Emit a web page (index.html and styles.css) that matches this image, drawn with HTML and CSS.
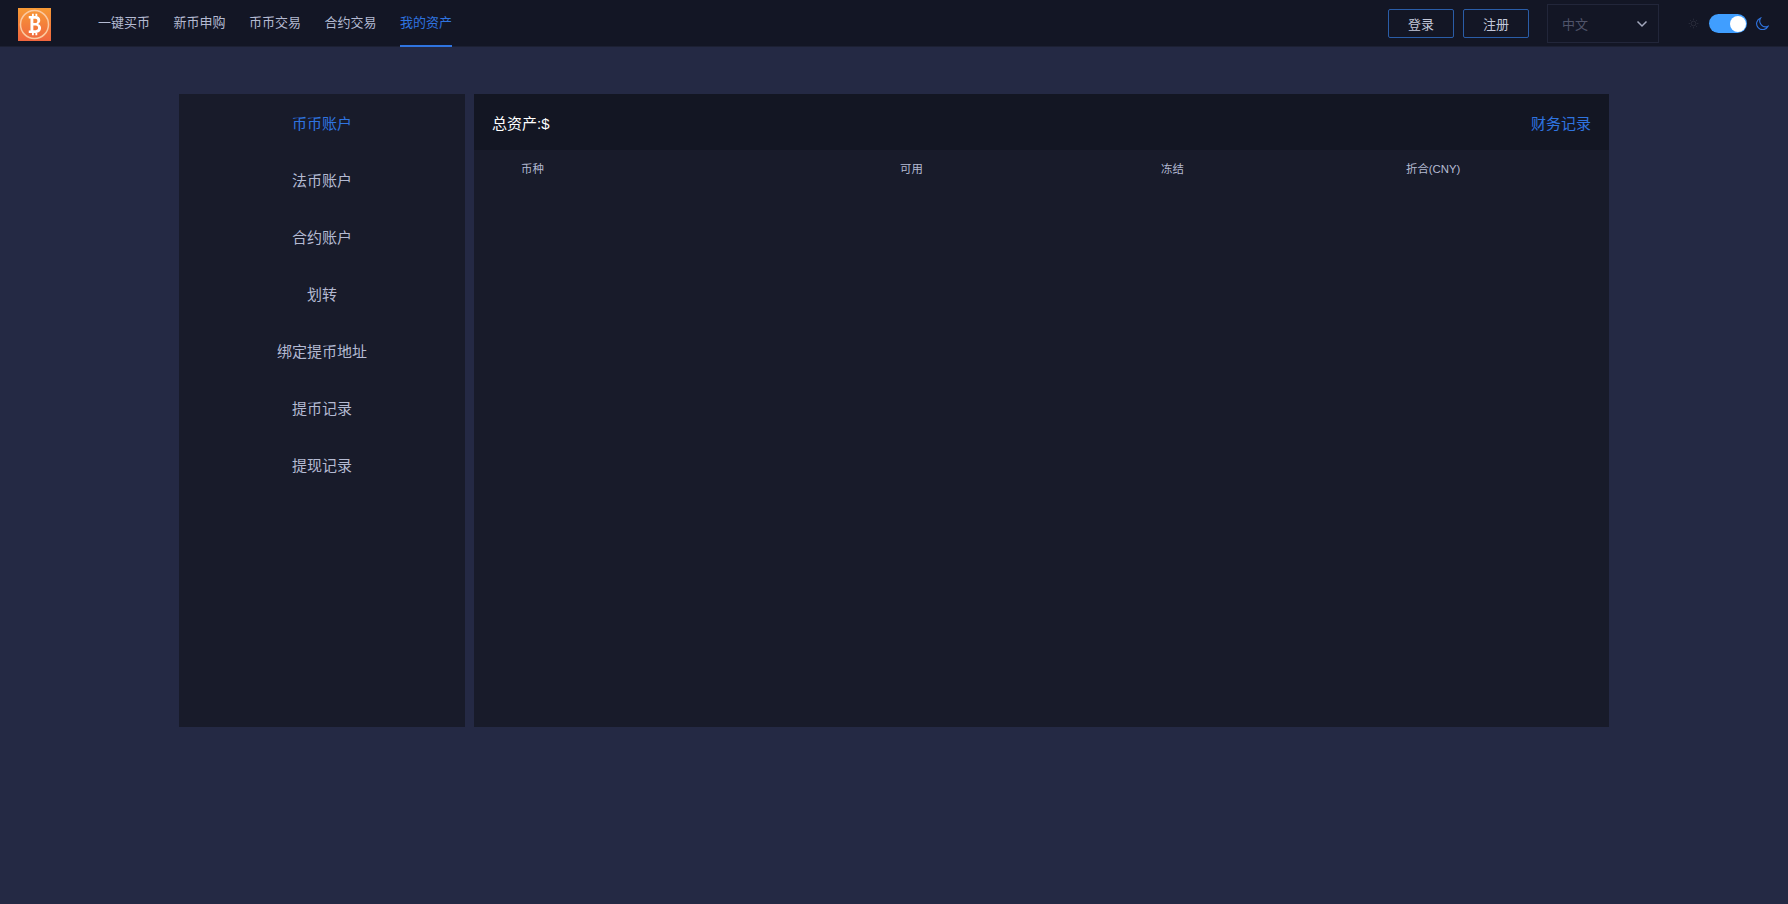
FILE: index.html
```html
<!DOCTYPE html>
<html lang="zh-CN">
<head>
<meta charset="utf-8">
<title>我的资产</title>
<link rel="stylesheet" href="styles.css">
</head>
<body>
<header class="topbar">
  <svg class="logo" viewBox="0 0 33 33" aria-hidden="true">
    <defs><linearGradient id="lg" x1="0" y1="0" x2="0" y2="1"><stop offset="0" stop-color="#f79a36"/><stop offset="1" stop-color="#f0663f"/></linearGradient></defs>
    <rect width="33" height="33" fill="url(#lg)"/>
    <circle cx="16.500" cy="16.500" r="14" fill="none" stroke="#fbc9a0" stroke-width="1.500"/>
    <path transform="translate(16.500 16.500) scale(1.150 1.200) translate(-17 -16.500)" d="M12 9.500h6c2.600 0 4 1.400 4 3.400 0 1.500-.8 2.600-2.100 3.100 1.700.4 2.800 1.700 2.800 3.500 0 2.400-1.700 4-4.500 4H12v-2h1.500V11.500H12z M16 11.800v3.400h1.800c1.100 0 1.700-.7 1.700-1.700s-.6-1.700-1.700-1.700z M16 17.400v3.800h2.200c1.200 0 1.900-.8 1.900-1.900s-.7-1.900-1.900-1.900z M14.800 7.500h1.600v2h-1.600z M17.800 7.500h1.600v2h-1.600z M14.800 23.500h1.600v2h-1.600z M17.800 23.500h1.600v2h-1.600z" fill="#fff" fill-rule="evenodd"/>
  </svg>
  <nav class="nav">
    <a class="nav-item">一键买币</a>
    <a class="nav-item">新币申购</a>
    <a class="nav-item">币币交易</a>
    <a class="nav-item">合约交易</a>
    <a class="nav-item is-active">我的资产</a>
  </nav>
  <div class="actions">
    <button class="btn">登录</button>
    <button class="btn">注册</button>
    <div class="lang">
      <span>中文</span>
      <svg class="chev" viewBox="0 0 12 8" aria-hidden="true"><path d="M1.500 1.500 6 6l4.500-4.500" fill="none" stroke="#a3a8bd" stroke-width="1.500"/></svg>
    </div>
    <div class="theme">
      <svg class="sun" viewBox="0 0 14 14" aria-hidden="true">
        <circle cx="7" cy="7" r="3" fill="none" stroke="#2a2d3c" stroke-width="1.200"/>
        <path d="M7 .8v2M7 11.200v2M.8 7h2M11.200 7h2M2.600 2.600l1.400 1.400M10 10l1.400 1.400M2.600 11.400 4 10M10 4l1.400-1.400" stroke="#2a2d3c" stroke-width="1.100"/>
      </svg>
      <span class="toggle"><span class="knob"></span></span>
      <svg class="moon" viewBox="0 0 14 14" aria-hidden="true"><path d="M5 1a6.300 6.300 0 0 0 8 9A6.500 6.500 0 1 1 5 1z" fill="none" stroke="#2f74e0" stroke-width="1.200"/></svg>
    </div>
  </div>
</header>
<main class="page">
  <aside class="side">
    <a class="side-item is-active">币币账户</a>
    <a class="side-item">法币账户</a>
    <a class="side-item">合约账户</a>
    <a class="side-item">划转</a>
    <a class="side-item">绑定提币地址</a>
    <a class="side-item">提币记录</a>
    <a class="side-item">提现记录</a>
  </aside>
  <section class="panel">
    <div class="panel-head">
      <span class="total">总资产:$</span>
      <a class="records">财务记录</a>
    </div>
    <div class="table-head">
      <span>币种</span>
      <span>可用</span>
      <span>冻结</span>
      <span>折合(CNY)</span>
    </div>
  </section>
</main>
</body>
</html>
```
FILE: styles.css
```css
* { box-sizing: border-box; }
html, body { height: 100%; }
body {
  margin: 0;
  background: #242944;
  font-family: "Liberation Sans", "Noto Sans CJK SC", sans-serif;
  color: #b4bad2;
  overflow: hidden;
}
.topbar {
  display: flex;
  align-items: center;
  height: 47px;
  padding: 0 18px 0 18px;
  background: #131625;
  box-shadow: inset 0 -1px 0 #1c2033;
}
.logo { width: 33px; height: 33px; flex: none; margin-top: 1px; }
.nav { display: flex; gap: 23.500px; margin-left: 47px; height: 47px; }
.nav-item {
  display: block;
  font-size: 13px;
  line-height: 46px;
  color: #b4bad2;
}
.nav-item.is-active {
  color: #2f74e0;
  line-height: 45px;
  border-bottom: 2px solid #2f74e0;
}
.actions { display: flex; align-items: center; margin-left: auto; }
.btn {
  width: 66px;
  height: 29px;
  margin-right: 9px;
  padding: 0;
  background: transparent;
  border: 1px solid #2a5da8;
  border-radius: 2px;
  font: 13px "Liberation Sans", "Noto Sans CJK SC", sans-serif;
  color: #c3c8da;
}
.btn + .btn { margin-right: 18px; }
.lang {
  display: flex;
  align-items: center;
  justify-content: space-between;
  width: 112px;
  height: 39px;
  padding: 0 10px 0 14px;
  border: 1px solid #22263a;
  font-size: 13px;
  color: #50546a;
}
.chev { width: 12px; height: 8px; }
.theme { display: flex; align-items: center; margin: 0 1px 0 29px; }
.sun { width: 11px; height: 11px; }
.toggle {
  display: flex;
  justify-content: flex-end;
  align-items: center;
  width: 38px;
  height: 19px;
  margin: 0 9px 0 10px;
  padding-right: 1px;
  background: #409eff;
  border-radius: 10px;
}
.knob { width: 16px; height: 16px; border-radius: 50%; background: #fff; }
.moon { width: 13px; height: 13px; }
.page {
  display: flex;
  gap: 9px;
  width: 1430px;
  height: 633px;
  margin: 47px 0 0 179px;
}
.side { width: 286px; flex: none; background: #181b2a; }
.side-item {
  display: block;
  height: 57px;
  font-size: 15px;
  line-height: 59px;
  text-align: center;
  color: #b4bad2;
}
.side-item.is-active { color: #2f74e0; }
.panel { flex: 1; background: #181b2a; }
.panel-head {
  display: flex;
  justify-content: space-between;
  align-items: center;
  height: 56px;
  padding: 0 18px;
  background: #131623;
  font-size: 15px;
}
.total { color: #fff; }
.records { color: #2f74e0; }
.table-head {
  display: grid;
  grid-template-columns: 379px 261px 245px 1fr;
  padding-left: 47px;
  font-size: 11.400px;
  line-height: 38px;
  color: #b4bad2;
}
```
